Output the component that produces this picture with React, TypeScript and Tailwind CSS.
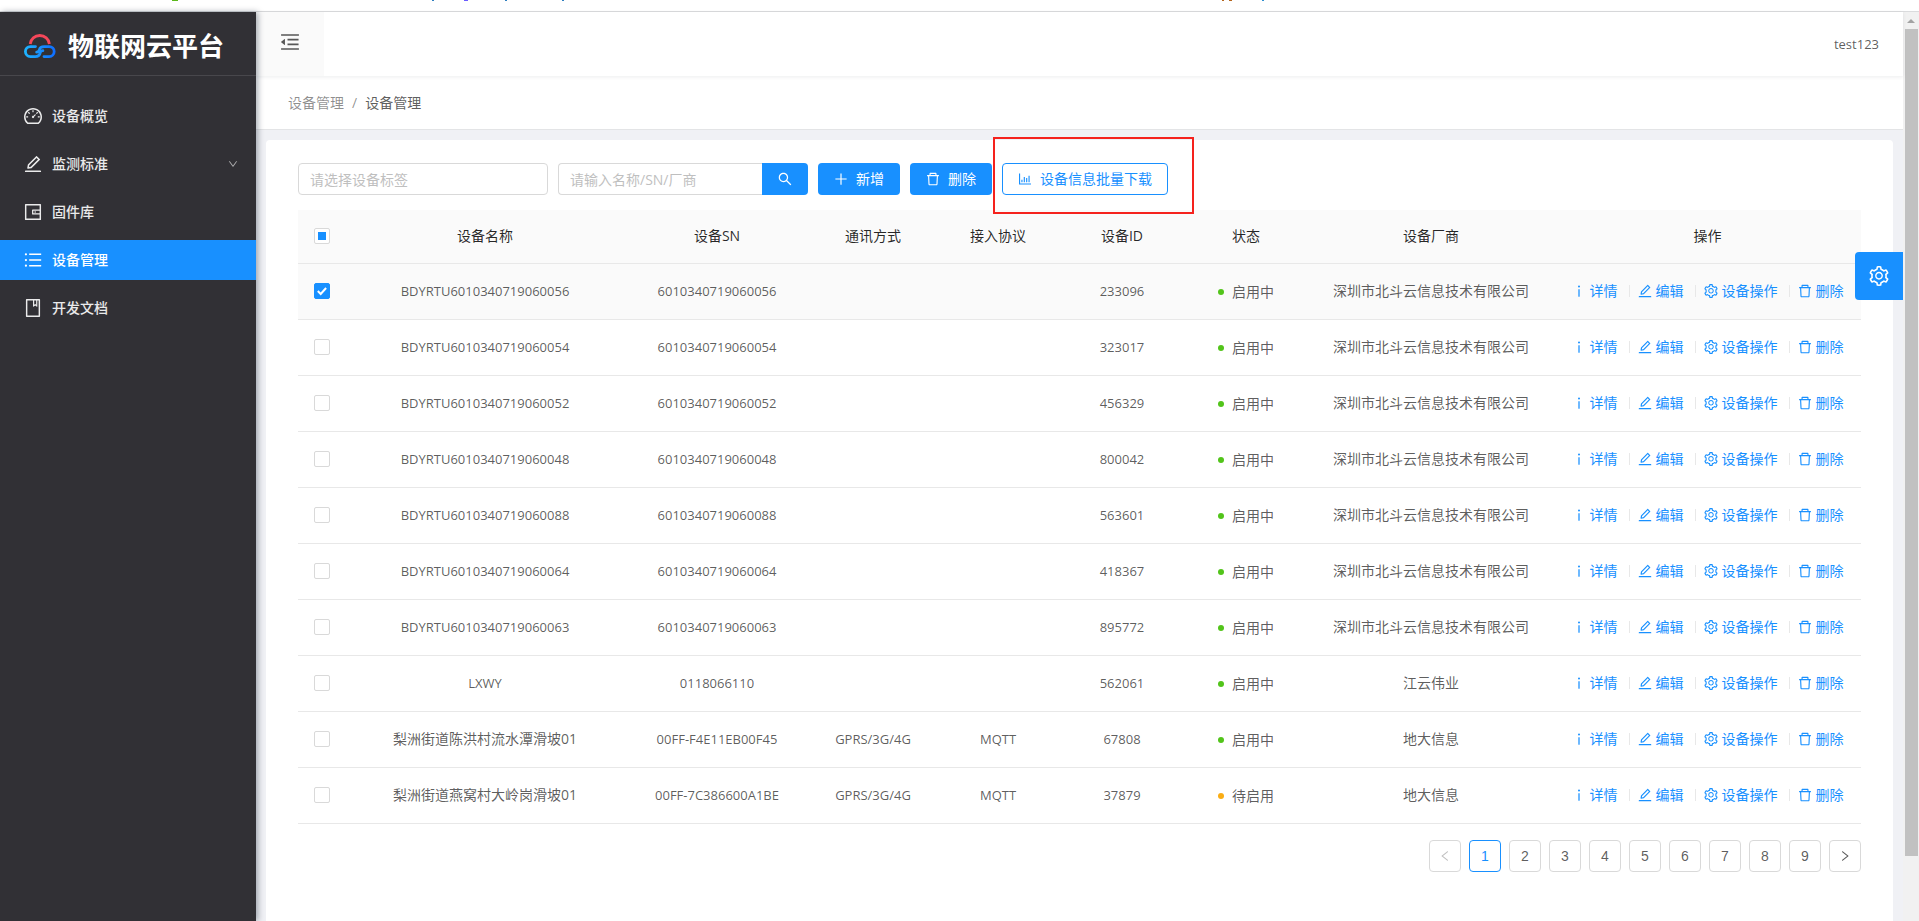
import { useEffect, useRef, useState } from 'react';
import {
  AiOutlineBarChart,
  AiOutlineBook,
  AiOutlineDashboard,
  AiOutlineDelete,
  AiOutlineDown,
  AiOutlineEdit,
  AiOutlineInfo,
  AiOutlineLeft,
  AiOutlineMenuFold,
  AiOutlinePlus,
  AiOutlineRight,
  AiOutlineSearch,
  AiOutlineSetting,
  AiOutlineUnorderedList,
  AiOutlineWallet,
} from 'react-icons/ai';
import type { IconType } from 'react-icons';

type Device = {
  name: string;
  sn: string;
  comm?: string;
  protocol?: string;
  id: string;
  active: boolean;
  vendor: string;
};

const BEIDOU = '深圳市北斗云信息技术有限公司';

const DEVICES: Device[] = [
  { name: 'BDYRTU6010340719060056', sn: '6010340719060056', id: '233096', active: true, vendor: BEIDOU },
  { name: 'BDYRTU6010340719060054', sn: '6010340719060054', id: '323017', active: true, vendor: BEIDOU },
  { name: 'BDYRTU6010340719060052', sn: '6010340719060052', id: '456329', active: true, vendor: BEIDOU },
  { name: 'BDYRTU6010340719060048', sn: '6010340719060048', id: '800042', active: true, vendor: BEIDOU },
  { name: 'BDYRTU6010340719060088', sn: '6010340719060088', id: '563601', active: true, vendor: BEIDOU },
  { name: 'BDYRTU6010340719060064', sn: '6010340719060064', id: '418367', active: true, vendor: BEIDOU },
  { name: 'BDYRTU6010340719060063', sn: '6010340719060063', id: '895772', active: true, vendor: BEIDOU },
  { name: 'LXWY', sn: '0118066110', id: '562061', active: true, vendor: '江云伟业' },
  { name: '梨洲街道陈洪村流水潭滑坡01', sn: '00FF-F4E11EB00F45', comm: 'GPRS/3G/4G', protocol: 'MQTT', id: '67808', active: true, vendor: '地大信息' },
  { name: '梨洲街道燕窝村大岭岗滑坡01', sn: '00FF-7C386600A1BE', comm: 'GPRS/3G/4G', protocol: 'MQTT', id: '37879', active: false, vendor: '地大信息' },
];

const MENU = [
  { label: '设备概览', icon: AiOutlineDashboard },
  { label: '监测标准', icon: AiOutlineEdit, expandable: true },
  { label: '固件库', icon: AiOutlineWallet },
  { label: '设备管理', icon: AiOutlineUnorderedList, current: true },
  { label: '开发文档', icon: AiOutlineBook },
];

/* Trims the blank margin that the Ant icons carry inside their view box. */
function Icon({ of: Glyph, className = 'size-3.5' }: { of: IconType; className?: string }) {
  return <Glyph viewBox="64 64 896 896" className={className} />;
}

function Logo() {
  return (
    <svg viewBox="0 0 32 24" className="h-6 w-8" fill="none" strokeWidth="2.8" strokeLinecap="round">
      <defs>
        <linearGradient id="logo-blue" gradientUnits="userSpaceOnUse" x1="0" y1="0" x2="32" y2="0">
          <stop offset="0" stopColor="#1fb6ff" />
          <stop offset="1" stopColor="#0f6bff" />
        </linearGradient>
      </defs>
      <path d="M6.200 10C6.800 5 10.800 1.500 15.800 1.500S24.800 5 25.400 10" stroke="#f5475a" strokeLinecap="butt" />
      <path d="M11.500 12.600H6.400a5 5 0 0 0 0 10h4.800c3.600 0 4.600-1.600 4.900-3.600.3-1.600 1-2.300 2.800-2.300" stroke="url(#logo-blue)" />
      <path d="M20 22.600h5.200a5 5 0 0 0 0-10h-4.800c-3.600 0-4.600 1.300-4.900 3-.3 1.900-1 2.600-2.800 2.600" stroke="url(#logo-blue)" />
    </svg>
  );
}

function Sidebar() {
  return (
    <aside className="z-10 w-64 shrink-0 bg-[#313035] text-white shadow-[2px_0_6px_rgba(0,21,41,0.35)]">
      <div className="flex h-16 items-center gap-3 border-b border-[#48474c] pt-1 pl-6">
        <Logo />
        <h1 className="text-[26px] leading-8 font-bold">物联网云平台</h1>
      </div>
      <nav className="flex flex-col gap-2 pt-5">
        {MENU.map(({ label, icon, expandable, current }) => (
          <a
            key={label}
            href="#"
            className={
              current
                ? 'flex h-10 items-center gap-2.5 bg-[#1890ff] px-6 font-medium'
                : 'flex h-10 items-center gap-2.5 px-6 font-medium text-white/90'
            }
          >
            <Icon of={icon} className="size-[18px]" />
            <span className="flex-1">{label}</span>
            {expandable && <Icon of={AiOutlineDown} className="-mr-1.5 size-2.5 text-white/60" />}
          </a>
        ))}
      </nav>
    </aside>
  );
}

function Checkbox({
  label,
  checked,
  partial = false,
  onChange,
}: {
  label: string;
  checked: boolean;
  partial?: boolean;
  onChange: () => void;
}) {
  const ref = useRef<HTMLInputElement>(null);
  useEffect(() => {
    if (ref.current) ref.current.indeterminate = partial;
  }, [partial]);
  return (
    <span className="relative mx-auto block size-4">
      <input
        ref={ref}
        type="checkbox"
        aria-label={label}
        checked={checked}
        onChange={onChange}
        className="block size-4 appearance-none rounded-xs border border-[#d9d9d9] bg-white checked:border-[#1890ff] checked:bg-[#1890ff]"
      />
      {partial && <span className="pointer-events-none absolute inset-1 bg-[#1890ff]" />}
      {checked && !partial && (
        <svg viewBox="0 0 16 16" className="pointer-events-none absolute inset-0 size-4" fill="none" stroke="#fff" strokeWidth="2">
          <path d="M3.800 8l2.900 3 5.400-6" />
        </svg>
      )}
    </span>
  );
}

function Action({ icon, label }: { icon: IconType; label: string }) {
  return (
    <a href="#" className="flex items-center gap-1 text-[#1890ff]">
      <Icon of={icon} />
      {label}
    </a>
  );
}

function Divider() {
  return <span className="mr-2 ml-[11px] h-3 w-px bg-[#e8e8e8]" />;
}

function DeviceTable() {
  const [selected, setSelected] = useState<number[]>([0]);
  const all = selected.length === DEVICES.length;
  const toggle = (i: number) =>
    setSelected(selected.includes(i) ? selected.filter((n) => n !== i) : [...selected, i]);
  return (
    <table className="mt-[15px] w-full table-fixed border-collapse text-center">
      <colgroup>
        <col className="w-12" />
        <col className="w-[278px]" />
        <col className="w-[186px]" />
        <col className="w-[126px]" />
        <col className="w-[124px]" />
        <col className="w-[124px]" />
        <col className="w-[124px]" />
        <col className="w-[246px]" />
        <col className="w-[307px]" />
      </colgroup>
      <thead className="bg-[#fafafa] text-black/85">
        <tr className="h-[53px] border-b border-[#e8e8e8]">
          <th>
            <Checkbox
              label="全选"
              checked={all}
              partial={selected.length > 0 && !all}
              onChange={() => setSelected(all ? [] : DEVICES.map((_, i) => i))}
            />
          </th>
          {['设备名称', '设备SN', '通讯方式', '接入协议', '设备ID', '状态', '设备厂商', '操作'].map((title) => (
            <th key={title} className="font-normal">
              {title}
            </th>
          ))}
        </tr>
      </thead>
      <tbody>
        {DEVICES.map((d, i) => (
          <tr
            key={d.id}
            className={
              selected.includes(i)
                ? 'h-14 border-b border-[#e8e8e8] bg-[#fafafa]'
                : 'h-14 border-b border-[#e8e8e8]'
            }
          >
            <td>
              <Checkbox label={`选择 ${d.name}`} checked={selected.includes(i)} onChange={() => toggle(i)} />
            </td>
            <td className={i < 8 ? 'text-[13px]' : ''}>{d.name}</td>
            <td className="text-[13px]">{d.sn}</td>
            <td className="text-[13px]">{d.comm}</td>
            <td className="text-[13px]">{d.protocol}</td>
            <td className="text-[13px]">{d.id}</td>
            <td className="pt-0.5">
              <span className="flex items-center justify-center gap-2">
                <span className={d.active ? 'size-1.5 rounded-full bg-[#52c41a]' : 'size-1.5 rounded-full bg-[#faad14]'} />
                {d.active ? '启用中' : '待启用'}
              </span>
            </td>
            <td>{d.vendor}</td>
            <td>
              <div className="flex items-center justify-center">
                <Action icon={AiOutlineInfo} label="详情" />
                <Divider />
                <Action icon={AiOutlineEdit} label="编辑" />
                <Divider />
                <Action icon={AiOutlineSetting} label="设备操作" />
                <Divider />
                <Action icon={AiOutlineDelete} label="删除" />
              </div>
            </td>
          </tr>
        ))}
      </tbody>
    </table>
  );
}

function Toolbar() {
  const primary = 'flex h-8 items-center gap-2 rounded-sm bg-[#1890ff] px-4 text-white';
  return (
    <div className="flex gap-2.5">
      <input
        aria-label="设备标签"
        placeholder="请选择设备标签"
        className="h-8 w-[250px] rounded-sm border border-[#d9d9d9] px-[11px] placeholder:text-[#bfbfbf]"
      />
      <div className="flex">
        <input
          aria-label="名称/SN/厂商"
          placeholder="请输入名称/SN/厂商"
          className="h-8 w-[204px] rounded-l-sm border border-r-0 border-[#d9d9d9] px-[11px] placeholder:text-[#bfbfbf]"
        />
        <button aria-label="搜索" className="flex h-8 w-[46px] items-center justify-center rounded-r-sm bg-[#1890ff] text-white">
          <Icon of={AiOutlineSearch} />
        </button>
      </div>
      <button className={primary}>
        <Icon of={AiOutlinePlus} />
        新增
      </button>
      <button className={primary}>
        <Icon of={AiOutlineDelete} />
        删除
      </button>
      <div className="relative">
        <button className="flex h-8 items-center gap-2 rounded-sm border border-[#1890ff] bg-white px-[15px] text-[#1890ff]">
          <Icon of={AiOutlineBarChart} />
          设备信息批量下载
        </button>
        <span className="pointer-events-none absolute -top-[26px] -right-[26px] -bottom-[19px] -left-[9px] border-2 border-[#f5221d]" />
      </div>
    </div>
  );
}

function Pagination() {
  const box = 'flex size-8 items-center justify-center rounded-sm border';
  return (
    <nav aria-label="分页" className="mt-4 flex justify-end gap-2 font-['Liberation_Sans',Arial,sans-serif]">
      <button aria-label="上一页" disabled className={`${box} border-[#d9d9d9] text-black/25`}>
        <Icon of={AiOutlineLeft} className="size-3" />
      </button>
      {[1, 2, 3, 4, 5, 6, 7, 8, 9].map((n) => (
        <button
          key={n}
          className={n === 1 ? `${box} border-[#1890ff] font-medium text-[#1890ff]` : `${box} border-[#d9d9d9]`}
        >
          {n}
        </button>
      ))}
      <button aria-label="下一页" className={`${box} border-[#d9d9d9]`}>
        <Icon of={AiOutlineRight} className="size-3" />
      </button>
    </nav>
  );
}

function BrowserEdge() {
  return (
    <svg className="block h-3 w-full bg-white" aria-hidden="true">
      <path d="M172 0h6" stroke="#5cb81c" strokeWidth="2" />
      <path d="M432 0h2M505 0h2M562 0h2" stroke="#2f7fc0" strokeWidth="2" />
      <path d="M464 0h4" stroke="#6a5cff" strokeWidth="2" />
      <path d="M1222 0h2M1229 0h3" stroke="#b5651d" strokeWidth="2" />
      <path d="M1262 0h2" stroke="#2f8fd0" strokeWidth="2" />
      <rect y="11" width="100%" height="1" fill="#dadbdd" />
    </svg>
  );
}

function Scrollbar() {
  return (
    <div className="flex w-4 shrink-0 flex-col items-center bg-[#f1f1f1]" aria-hidden="true">
      <div className="flex h-[17px] items-center">
        <svg viewBox="0 0 8 4" className="h-1 w-2" fill="#a3a3a3">
          <path d="M4 0l4 4H0z" />
        </svg>
      </div>
      <div className="h-[91%] w-[13px] bg-[#c1c1c1]" />
    </div>
  );
}

export default function App() {
  return (
    <div className="flex h-screen flex-col overflow-hidden font-['Open_Sans','Noto_Sans_CJK_SC',sans-serif] text-sm text-black/65">
      <BrowserEdge />
      <div className="flex min-h-0 flex-1">
        <Sidebar />
        <div className="relative flex min-w-0 flex-1 flex-col bg-[#f0f1f5]">
          <header className="z-[1] flex h-16 shrink-0 items-center justify-between bg-white pr-6 shadow-[0_1px_4px_rgba(0,21,41,0.08)]">
            <button aria-label="收起菜单" className="flex h-16 w-[68px] items-center justify-center bg-[#fafafa] pb-1">
              <Icon of={AiOutlineMenuFold} className="size-5" />
            </button>
            <span className="text-[13px]">test123</span>
          </header>
          <nav aria-label="面包屑" className="flex h-[54px] shrink-0 items-center gap-2 border-b border-[#e3e4e6] bg-white pl-8">
            <a href="#" className="text-black/45">
              设备管理
            </a>
            <span className="text-black/45">/</span>
            <span>设备管理</span>
          </nav>
          <main className="mx-2.5 mt-2.5 flex-1 rounded-t-sm bg-white px-8 pt-[23px]">
            <Toolbar />
            <DeviceTable />
            <Pagination />
          </main>
          <button
            aria-label="设置"
            className="absolute top-60 right-0 flex size-12 items-center justify-center rounded-l-sm bg-[#1890ff] text-white"
          >
            <Icon of={AiOutlineSetting} className="size-5" />
          </button>
        </div>
        <Scrollbar />
      </div>
    </div>
  );
}
